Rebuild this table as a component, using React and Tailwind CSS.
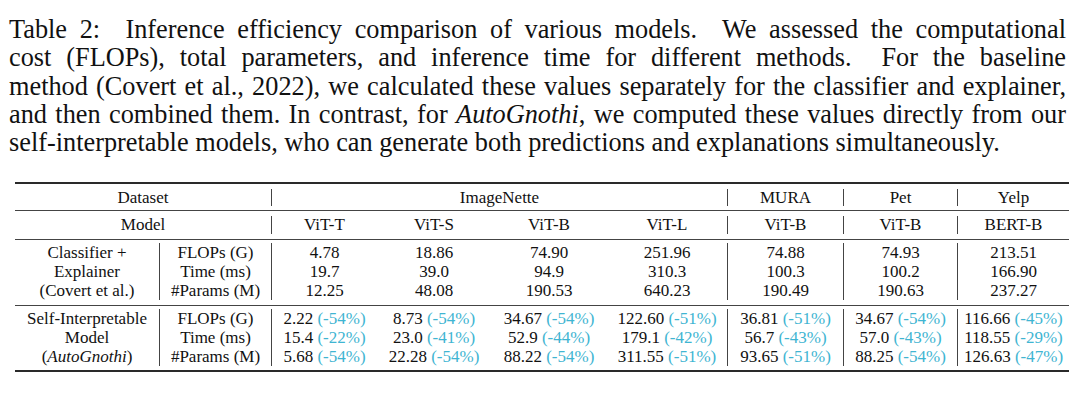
import React from "react";

const cyan = "text-[#3fb5d2]";

function Pct({ v, p }) {
  return (
    <>
      {v} <span className={cyan}>({p})</span>
    </>
  );
}

const top = [
  ["4.78", "19.7", "12.25"],
  ["18.86", "39.0", "48.08"],
  ["74.90", "94.9", "190.53"],
  ["251.96", "310.3", "640.23"],
  ["74.88", "100.3", "190.49"],
  ["74.93", "100.2", "190.63"],
  ["213.51", "166.90", "237.27"],
];

const bottom = [
  [["2.22", "-54%"], ["15.4", "-22%"], ["5.68", "-54%"]],
  [["8.73", "-54%"], ["23.0", "-41%"], ["22.28", "-54%"]],
  [["34.67", "-54%"], ["52.9", "-44%"], ["88.22", "-54%"]],
  [["122.60", "-51%"], ["179.1", "-42%"], ["311.55", "-51%"]],
  [["36.81", "-51%"], ["56.7", "-43%"], ["93.65", "-51%"]],
  [["34.67", "-54%"], ["57.0", "-43%"], ["88.25", "-54%"]],
  [["116.66", "-45%"], ["118.55", "-29%"], ["126.63", "-47%"]],
];

// which of the 7 numeric columns carry a left rule
const ruled = [true, false, false, false, true, true, true];

const grid =
  "grid grid-cols-[144px_112px_106px_114px_116px_120px_116px_114px_112px]";

function Stack({ lines, rule }) {
  return (
    <div
      className={
        "flex flex-col items-center leading-[19px] " +
        (rule ? "border-l border-[#444]" : "")
      }
    >
      {lines.map((l, i) => (
        <div key={i} className="whitespace-nowrap">
          {l}
        </div>
      ))}
    </div>
  );
}

export default function App() {
  return (
    <div className="w-[1080px] h-[404px] bg-white text-[#111] font-['Liberation_Serif',serif] overflow-hidden">
      <div className="pt-[16px] pl-[9px] w-[1066px] text-[26.3px] leading-[28.3px]">
        <div className="text-justify [text-align-last:justify] whitespace-pre">
          {"Table 2:  Inference efficiency comparison of various models.  We assessed the computational"}
        </div>
        <div className="text-justify [text-align-last:justify] whitespace-pre">
          {"cost (FLOPs), total parameters, and inference time for different methods.  For the baseline"}
        </div>
        <div className="text-justify [text-align-last:justify]">
          method (Covert et al., 2022), we calculated these values separately for the classifier and explainer,
        </div>
        <div className="text-justify [text-align-last:justify]">
          and then combined them. In contrast, for <i>AutoGnothi</i>, we computed these values directly from our
        </div>
        <div>
          self-interpretable models, who can generate both predictions and explanations simultaneously.
        </div>
      </div>

      <div className="mt-[25px] ml-[15px] w-[1054px] text-[17px]">
        <div className="h-[2px] bg-[#2a2a2a]" />

        <div className={grid + " pt-[5px] pb-[4px] leading-[17px]"}>
          <div className="col-span-2 text-center">Dataset</div>
          <div className="col-span-4 text-center border-l border-[#444]">ImageNette</div>
          <div className="text-center border-l border-[#444]">MURA</div>
          <div className="text-center border-l border-[#444]">Pet</div>
          <div className="text-center border-l border-[#444]">Yelp</div>
        </div>

        <div className="h-[1px] bg-[#444]" />

        <div className={grid + " pt-[5px] pb-[5px] leading-[18px]"}>
          <div className="col-span-2 text-center">Model</div>
          <div className="text-center border-l border-[#444]">ViT-T</div>
          <div className="text-center">ViT-S</div>
          <div className="text-center">ViT-B</div>
          <div className="text-center">ViT-L</div>
          <div className="text-center border-l border-[#444]">ViT-B</div>
          <div className="text-center border-l border-[#444]">ViT-B</div>
          <div className="text-center border-l border-[#444]">BERT-B</div>
        </div>

        <div className="h-[1px] bg-[#444]" />

        <div className={grid + " pt-[3px] pb-[5px]"}>
          <Stack lines={["Classifier +", "Explainer", "(Covert et al.)"]} />
          <Stack lines={["FLOPs (G)", "Time (ms)", "#Params (M)"]} rule />
          {top.map((col, i) => (
            <Stack key={i} lines={col} rule={ruled[i]} />
          ))}
        </div>

        <div className="h-[1px] bg-[#444]" />

        <div className={grid + " pt-[3px] pb-[4px]"}>
          <Stack
            lines={[
              "Self-Interpretable",
              "Model",
              <>
                (<i>AutoGnothi</i>)
              </>,
            ]}
          />
          <Stack lines={["FLOPs (G)", "Time (ms)", "#Params (M)"]} rule />
          {bottom.map((col, i) => (
            <Stack
              key={i}
              lines={col.map(([v, p]) => (
                <Pct v={v} p={p} />
              ))}
              rule={ruled[i]}
            />
          ))}
        </div>

        <div className="h-[2px] bg-[#2a2a2a]" />
      </div>
    </div>
  );
}
